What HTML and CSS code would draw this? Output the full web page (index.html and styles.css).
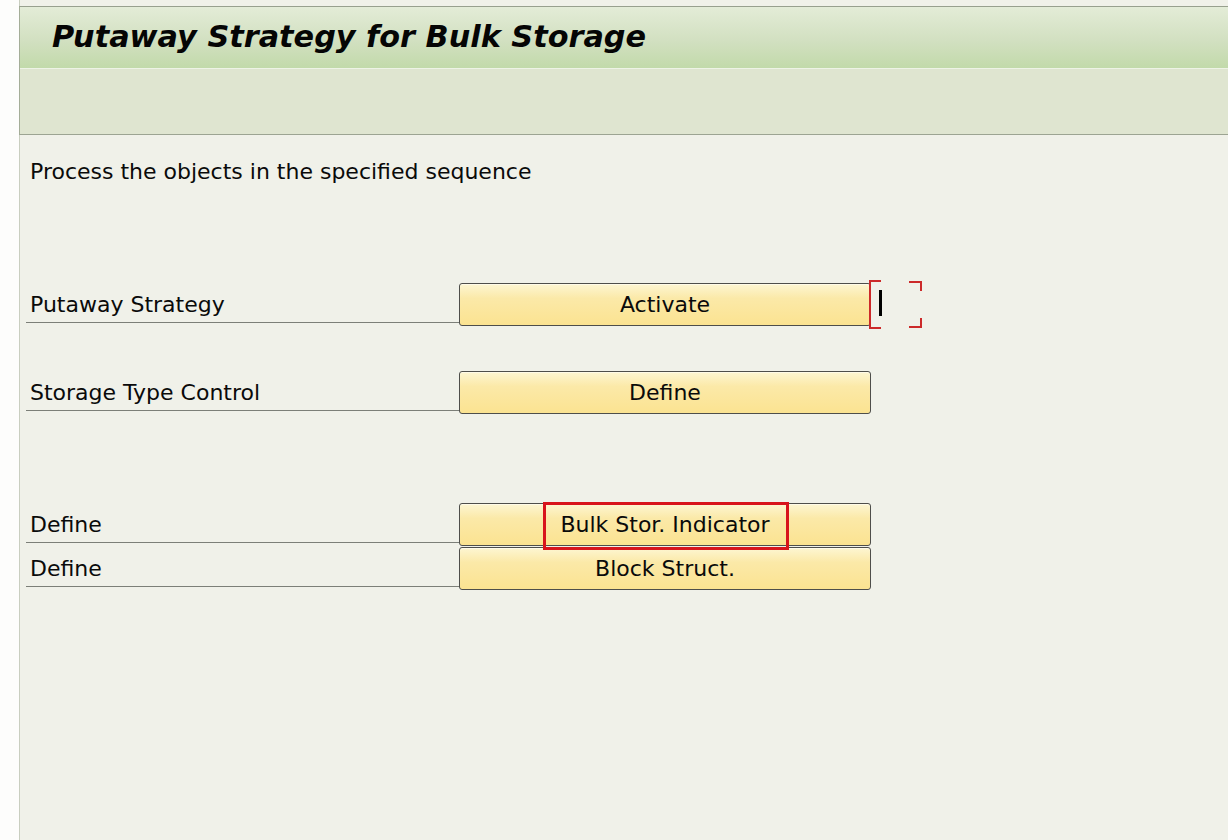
FILE: index.html
```html
<!DOCTYPE html>
<html>
<head>
<meta charset="utf-8">
<link rel="stylesheet" href="styles.css">
</head>
<body>
<div class="page">
  <div class="header">
    <div class="titlebar"><h1 class="title">Putaway Strategy for Bulk Storage</h1></div>
    <div class="toolbar"></div>
  </div>
  <div class="content">
    <p class="intro">Process the objects in the specified sequence</p>
    <div class="grid g1">
      <div class="label">Putaway Strategy</div>
      <div class="btnwrap">
        <button class="btn">Activate</button>
        <span class="focus">
          <span class="br-left"></span>
          <span class="caret"></span>
          <span class="cn-tr"></span>
          <span class="cn-br"></span>
        </span>
      </div>
    </div>
    <div class="grid g2">
      <div class="label">Storage Type Control</div>
      <div class="btnwrap"><button class="btn">Define</button></div>
    </div>
    <div class="grid g3">
      <div class="label">Define</div>
      <div class="btnwrap"><button class="btn">Bulk Stor. Indicator</button><span class="hl"></span></div>
      <div class="label">Define</div>
      <div class="btnwrap"><button class="btn">Block Struct.</button></div>
    </div>
  </div>
</div>
</body>
</html>
```
FILE: styles.css
```css
html, body {
  margin: 0;
  padding: 0;
  background: #fdfdfc;
  height: 100%;
}
.page {
  margin-left: 19px;
  padding-top: 6px;
  height: 834px;
  background: #f0f1e9;
  border-left: 1px solid #c9cec0;
  font-family: "DejaVu Sans", sans-serif;
  color: #0a0a0a;
}
.header {
  border-top: 1px solid #98a08e;
  border-bottom: 1px solid #9ca492;
  border-left: 1px solid #a4ad98;
  margin-left: -1px;
}
.titlebar {
  height: 61px;
  background: linear-gradient(#e3ecd7, #d2e0c1 55%, #c2daaa);
  border-bottom: 1px solid #eef3e6;
  display: flex;
  align-items: center;
}
.title {
  margin: -2px 0 0 32px;
  font-family: "DejaVu Sans", sans-serif;
  font-size: 30.3px;
  font-weight: bold;
  font-style: italic;
  color: #050505;
}
.toolbar {
  height: 65px;
  background: #dfe5d0;
}
.content {
  padding-left: 6px;
}
.intro {
  margin: 23px 0 0 4px;
  font-size: 22px;
  line-height: 28px;
}
.grid {
  display: grid;
  grid-template-columns: 433px 412px;
  width: 845px;
}
.g1 { margin-top: 97px; }
.g2 { margin-top: 45px; }
.g3 { margin-top: 89px; row-gap: 1px; }
.label {
  font-size: 22px;
  padding-left: 4px;
  padding-bottom: 4px;
  margin-bottom: 3px;
  border-bottom: 1px solid #7c7f78;
  align-self: end;
  line-height: 26px;
}
.btnwrap {
  position: relative;
}
.btn {
  display: block;
  width: 412px;
  height: 43px;
  margin: 0;
  padding: 0;
  border: 1px solid #4e4e4a;
  border-radius: 3px;
  background: linear-gradient(#fdf6d2 0%, #fbe9a8 35%, #fbe391 100%);
  font-family: "DejaVu Sans", sans-serif;
  font-size: 22px;
  color: #0a0a0a;
  text-align: center;
  line-height: 39px;
  box-shadow: inset 0 1px 0 #fffbe8;
}
.hl {
  position: absolute;
  z-index: 2;
  left: 84px;
  top: -1px;
  width: 246px;
  height: 48px;
  box-sizing: border-box;
  border: 3px solid #d8141c;
}
.focus {
  position: absolute;
  z-index: 2;
  left: 410px;
  top: -3px;
  width: 55px;
  height: 48px;
}
.br-left {
  position: absolute;
  left: 0;
  top: 0;
  width: 10px;
  height: 45px;
  border: 2px solid #cc2a2a;
  border-right: none;
}
.caret {
  position: absolute;
  left: 10px;
  top: 10px;
  width: 3px;
  height: 26px;
  background: #000;
}
.cn-tr {
  position: absolute;
  left: 40px;
  top: 1px;
  width: 11px;
  height: 8px;
  border-top: 2px solid #cc2a2a;
  border-right: 2px solid #cc2a2a;
}
.cn-br {
  position: absolute;
  left: 40px;
  top: 38px;
  width: 11px;
  height: 8px;
  border-bottom: 2px solid #cc2a2a;
  border-right: 2px solid #cc2a2a;
}
```
